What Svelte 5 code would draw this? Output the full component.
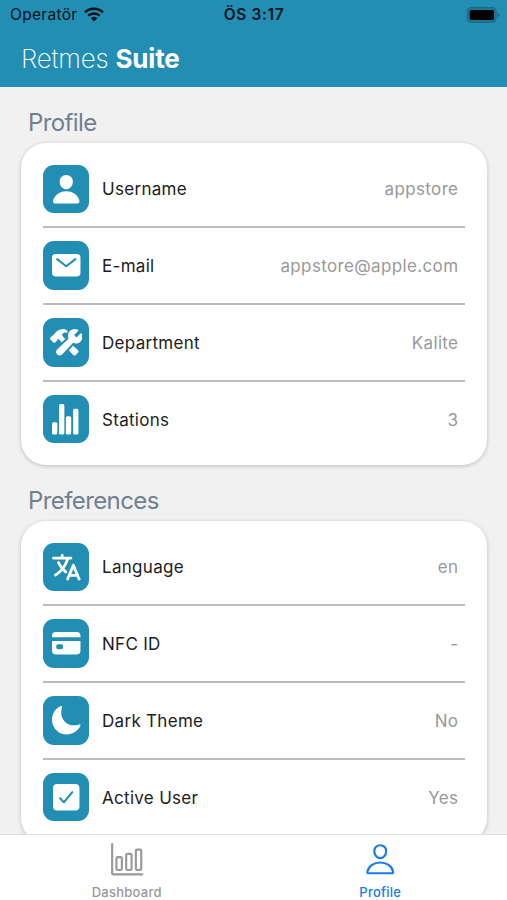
<script>
  const icons = {
    person: 'M332.64 64.58C313.18 43.57 286 32 256 32c-30.16 0-57.43 11.5-76.8 32.38-19.58 21.11-29.12 49.8-26.88 80.78C156.76 206.28 203.27 256 256 256s99.16-49.71 103.67-110.82c2.27-30.7-7.33-59.33-27.03-80.6zM432 480H80a31 31 0 01-24.2-11.13c-6.5-7.77-9.12-18.38-7.18-29.11C57.06 392.94 83.4 353.61 124.8 326c36.78-24.51 83.37-38 131.2-38s94.42 13.5 131.2 38c41.4 27.6 67.74 66.93 76.18 113.75 1.94 10.73-.68 21.34-7.18 29.11A31 31 0 01432 480z',
    mail: 'M424 80H88a56.06 56.06 0 00-56 56v240a56.06 56.06 0 0056 56h336a56.06 56.06 0 0056-56V136a56.06 56.06 0 00-56-56zm-14.18 92.63l-144 112a16 16 0 01-19.64 0l-144-112a16 16 0 1119.64-25.26L256 251.73l134.18-104.36a16 16 0 0119.64 25.26z',
    tools: 'M503.58 126.2a16.85 16.85 0 00-27.07-4.55l-51.15 51.15a11.15 11.15 0 01-15.66 0l-22.48-22.48a11.17 11.17 0 010-15.67l50.88-50.89a16.85 16.85 0 00-5.27-27.4c-39.71-17-89.08-7.45-120 23.29-26.81 26.61-34.83 68-22 113.7a11 11 0 01-3.16 11.1L114.77 365.1a56.76 56.76 0 1080.14 80.18L357 272.08a11 11 0 0110.9-3.17c45 12 86 4 112.43-22 15.2-15 25.81-36.17 29.89-59.71 3.83-22.2 1.41-44.06-6.64-61zM437.33 378.41c-13.94-11.59-43.72-38.4-74.07-66.22l-66.07 70.61c28.24 30 53.8 57.85 65 70.88l.07.08A30 30 0 00383.72 464h1.1a30.11 30.11 0 0021-8.62l.07-.07 33.43-33.37a29.46 29.46 0 00-2-43.53zM118.54 214.55a20.48 20.48 0 00-3-10.76 2.76 2.76 0 012.62-4.22h.06c.84.09 5.33.74 11.7 4.61 4.73 2.87 18.23 12.08 41.73 35.54a34.23 34.23 0 007.22 22.12l66.23-61.55a33.73 33.73 0 00-21.6-9.2 2.65 2.65 0 01-.21-.26l-.65-.69-24.54-33.84a28.45 28.45 0 01-4-26.11 35.23 35.23 0 0111.78-16.35c5.69-4.41 18.53-9.72 29.44-10.62a52.92 52.92 0 0115.19.94 65.57 65.57 0 017.06 2.13 15.46 15.46 0 002.15.63 16 16 0 0016.38-25.06c-.26-.35-1.32-1.79-2.89-3.73a91.85 91.85 0 00-9.6-10.36c-8.15-7.36-29.27-19.77-57-19.77a123.13 123.13 0 00-46.3 9c-38.37 15.45-63.47 36.58-75.01 47.79l-.09.09A222.14 222.14 0 0063.7 129.5a27 27 0 00-4.7 11.77 7.33 7.33 0 01-7.71 6.17H50.2a20.65 20.65 0 00-14.59 5.9L6.16 182.05l-.32.32a20.89 20.89 0 00-.24 28.72c.19.2.37.39.57.58L53.67 258a21 21 0 0014.65 6 20.65 20.65 0 0014.59-5.9l29.46-28.79a20.51 20.51 0 006.17-14.76z',
    stats: 'M56 302h36a24 24 0 0124 24v146a24 24 0 01-24 24H56a24 24 0 01-24-24V326a24 24 0 0124-24zM166 16h36a24 24 0 0124 24v432a24 24 0 01-24 24h-36a24 24 0 01-24-24V40a24 24 0 0124-24zM274 208h36a24 24 0 0124 24v240a24 24 0 01-24 24h-36a24 24 0 01-24-24V232a24 24 0 0124-24zM388 92h36a24 24 0 0124 24v356a24 24 0 01-24 24h-36a24 24 0 01-24-24V116a24 24 0 0124-24z',
    language: 'M478.33 433.6l-90-218a22 22 0 00-40.67 0l-90 218a22 22 0 1040.67 16.79L316.66 406h102.67l18.33 44.39A22 22 0 00458 464a22 22 0 0020.32-30.4zM334.83 362L368 281.65 401.17 362zM267.84 342.92a22 22 0 00-4.89-30.7c-.2-.15-15-11.13-36.49-34.73 39.65-53.68 62.11-114.75 71.27-143.49H330a22 22 0 000-44H214V70a22 22 0 00-44 0v20H54a22 22 0 000 44h197.25c-9.52 26.95-27.05 69.5-53.79 108.36-31.41-41.68-43.08-68.65-43.17-68.87a22 22 0 00-40.58 17c.58 1.38 14.55 34.23 52.86 83.93.92 1.19 1.83 2.35 2.74 3.51-39.24 44.35-77.74 71.86-93.85 80.74a22 22 0 1021.07 38.63c2.16-1.18 48.6-26.89 101.63-85.59 22.52 24.08 38 35.44 38.93 36.1a22 22 0 0030.75-4.9z',
    card: 'M32 376a56 56 0 0056 56h336a56 56 0 0056-56V222H32zm66-76a30 30 0 0130-30h48a30 30 0 0130 30v20a30 30 0 01-30 30h-48a30 30 0 01-30-30zM424 80H88a56 56 0 00-56 56v26h448v-26a56 56 0 00-56-56z',
    moon: 'M264 480A232 232 0 0132 248c0-94 54-178.28 137.61-214.67a16 16 0 0121.06 21.06C181.07 76.43 176 104.66 176 136c0 110.28 89.72 200 200 200 31.34 0 59.57-5.07 81.61-14.67a16 16 0 0121.06 21.06C442.28 426 358 480 264 480z',
    check: 'M400 48H112a64.07 64.07 0 00-64 64v288a64.07 64.07 0 0064 64h288a64.07 64.07 0 0064-64V112a64.07 64.07 0 00-64-64zm-35.75 138.29l-134.4 160a16 16 0 01-12 5.71h-.27a16 16 0 01-11.89-5.3l-57.6-64a16 16 0 1123.78-21.4l45.29 50.32 122.59-145.91a16 16 0 0124.5 20.58z',
  };

  const sections = [
    {
      title: 'Profile',
      rows: [
        { icon: 'person', label: 'Username', value: 'appstore' },
        { icon: 'mail', label: 'E-mail', value: 'appstore@apple.com' },
        { icon: 'tools', label: 'Department', value: 'Kalite' },
        { icon: 'stats', label: 'Stations', value: '3' },
      ],
    },
    {
      title: 'Preferences',
      rows: [
        { icon: 'language', label: 'Language', value: 'en' },
        { icon: 'card', label: 'NFC ID', value: '-' },
        { icon: 'moon', label: 'Dark Theme', value: 'No' },
        { icon: 'check', label: 'Active User', value: 'Yes' },
      ],
    },
  ];
</script>

<div class="app">
  <header>
    <div class="status">
      <span class="carrier">
        Operatör
        <svg class="wifi" width="20" height="15" viewBox="0 0 20 15">
          <g fill="none" stroke="#02141b" stroke-width="2.5">
            <path d="M1 5.3a13 13 0 0 1 18 0" />
            <path d="M4.2 8.7a8.4 8.4 0 0 1 11.6 0" />
          </g>
          <path d="M6.8 11.3a4.7 4.7 0 0 1 6.4 0L10 14.5z" fill="#02141b" />
        </svg>
      </span>
      <span class="time">ÖS 3:17</span>
      <svg class="battery" width="33" height="16" viewBox="0 0 33 16">
        <rect x=".5" y=".6" width="28.6" height="14.8" rx="4" fill="#1b7795" stroke="#196781" />
        <rect x="2.7" y="3" width="24.3" height="10" rx="1.8" fill="#000" />
        <path d="M30.7 6v4.4q1.6-.7 1.6-2.2T30.7 6z" fill="#196781" />
      </svg>
    </div>
    <h1><span>Retmes</span> <b>Suite</b></h1>
  </header>

  <main>
    {#each sections as section}
      <section>
        <h2>{section.title}</h2>
        <div class="card">
          {#each section.rows as row}
            <div class="row">
              <span class="tile">
                <svg viewBox="0 0 512 512"><path d={icons[row.icon]} /></svg>
              </span>
              <span class="label">{row.label}</span>
              <span class="value">{row.value}</span>
            </div>
          {/each}
        </div>
      </section>
    {/each}
  </main>

  <nav>
    <div class="tab">
      <svg viewBox="0 0 512 512">
        <path d="M32 32v432a16 16 0 0016 16h432" />
        <rect x="96" y="224" width="80" height="192" rx="20" />
        <rect x="240" y="176" width="80" height="240" rx="20" />
        <rect x="383.64" y="112" width="80" height="304" rx="20" />
      </svg>
      <span>Dashboard</span>
    </div>
    <div class="tab active">
      <svg viewBox="0 0 512 512">
        <path d="M344 144c-3.92 52.87-44 96-88 96s-84.15-43.12-88-96c-4-55 35-96 88-96s92 42 88 96z" />
        <path d="M256 304c-87 0-175.3 48-191.64 138.6C62.39 453.52 68.57 464 80 464h352c11.44 0 17.62-10.48 15.65-21.4C431.3 352 343 304 256 304z" />
      </svg>
      <span>Profile</span>
    </div>
  </nav>
</div>

<style>
  .app {
    width: 507px;
    height: 900px;
    display: flex;
    flex-direction: column;
    overflow: hidden;
    background: #f1f1f1;
    font-family: Inter, 'Liberation Sans', sans-serif;
  }
  header {
    flex: none;
    height: 87px;
    background: #238eb3;
  }
  .status {
    height: 29px;
    padding: 0 7px 0 10px;
    display: grid;
    grid-template-columns: 1fr auto 1fr;
    align-items: center;
    font-size: 15.5px;
    color: #02141b;
  }
  .carrier {
    display: flex;
    align-items: center;
    gap: 7px;
    letter-spacing: 0.3px;
  }
  .time {
    font-weight: 600;
    letter-spacing: 0.6px;
    margin-right: 2px;
  }
  .battery {
    justify-self: end;
  }
  h1 {
    margin: 0;
    padding-left: 21px;
    font-size: 26px;
    line-height: 60px;
    font-weight: 200;
    color: #fff;
    letter-spacing: -0.2px;
  }
  h1 b {
    font-weight: 700;
  }
  main {
    flex: 1;
    min-height: 0;
    overflow: hidden;
    padding: 0 20px 0 21px;
  }
  h2 {
    margin: 0;
    height: 56px;
    padding: 20px 0 0 7px;
    box-sizing: border-box;
    font-size: 24px;
    line-height: 32px;
    font-weight: 400;
    letter-spacing: -0.6px;
    color: #708090;
  }
  .card {
    box-sizing: border-box;
    height: 322px;
    padding: 8.4px 22px 6.4px;
    border-radius: 25px;
    background: #fff;
    box-shadow: 0 1px 4px rgba(0, 0, 0, 0.22);
  }
  .row {
    box-sizing: border-box;
    height: 76.8px;
    display: flex;
    align-items: center;
    border-bottom: 2px solid #bcbcbc;
    font-size: 17px;
    padding-right: 7px;
  }
  .row:last-child {
    border-bottom-color: transparent;
  }
  .tile {
    width: 46px;
    height: 48.4px;
    border-radius: 11px;
    background: #238eb3;
    display: flex;
    align-items: center;
    justify-content: center;
  }
  .tile svg {
    width: 32.5px;
    height: 32.5px;
    fill: #fff;
  }
  .label {
    margin-left: 13px;
    color: #1c1c1c;
    letter-spacing: 0.3px;
    padding-top: 1px;
  }
  .value {
    margin-left: auto;
    margin-right: -0.4px;
    color: #999;
    letter-spacing: 0.36px;
    padding-top: 1px;
  }
  nav {
    flex: none;
    height: 66px;
    box-sizing: border-box;
    border-top: 1px solid #dfdfdf;
    background: #fff;
    display: flex;
    position: relative;
  }
  .tab {
    flex: 1;
    display: flex;
    flex-direction: column;
    align-items: center;
    padding-top: 7px;
    color: #999;
    font-size: 13px;
    font-weight: 500;
    line-height: 16px;
    letter-spacing: 0.25px;
  }
  .tab svg {
    width: 34.5px;
    height: 34.5px;
    fill: none;
    stroke: currentColor;
    stroke-width: 32;
    stroke-linecap: round;
    stroke-linejoin: round;
  }
  .tab span {
    margin-top: 7px;
  }
  .active {
    color: #187bf0;
  }
</style>
